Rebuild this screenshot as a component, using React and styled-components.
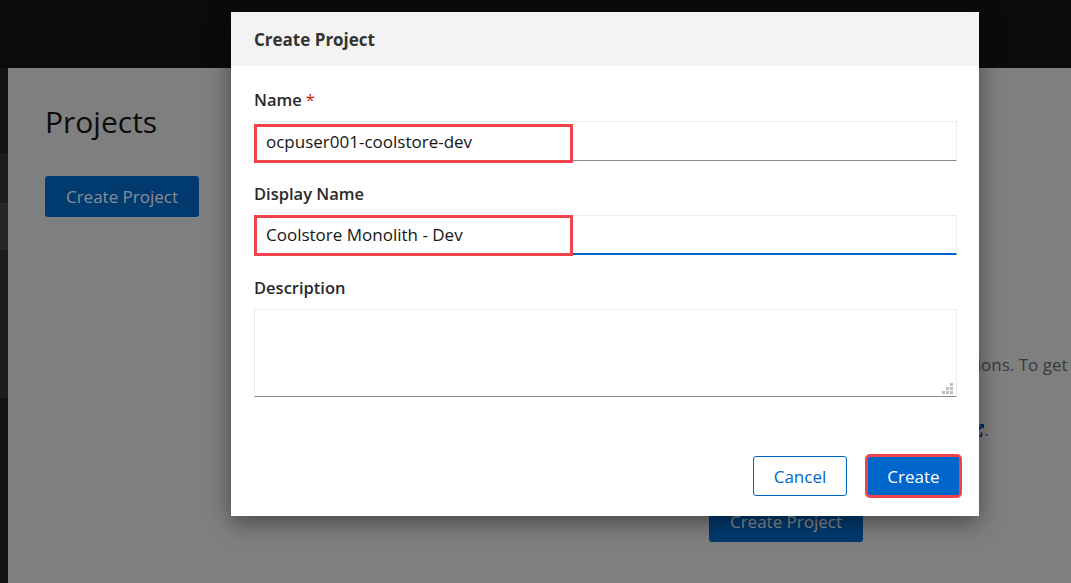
import React from "react";
import styled, { createGlobalStyle } from "styled-components";
import { FaExternalLinkAlt } from "react-icons/fa";

const GlobalStyle = createGlobalStyle`
  html, body {
    margin: 0;
    padding: 0;
    width: 1071px;
    height: 583px;
    overflow: hidden;
    background: #7f7f7f;
    font-family: "Open Sans", "Liberation Sans", sans-serif;
  }
  * { box-sizing: border-box; }
`;

const Page = styled.div`
  position: relative;
  width: 1071px;
  height: 583px;
  display: flex;
  flex-direction: column;
`;

const Masthead = styled.header`
  height: 68px;
  flex-shrink: 0;
  background: #0b0b0b;
`;

const Body = styled.div`
  flex: 1;
  display: flex;
  min-height: 0;
`;

const Sidebar = styled.nav`
  width: 8px;
  flex-shrink: 0;
  display: flex;
  flex-direction: column;
  background: #111214;
`;

const NavBand = styled.div`
  height: ${(p) => p.$h}px;
  background: ${(p) => p.$tone};
`;

const Main = styled.main`
  flex: 1;
  background: #7f7f7f;
  padding: 36px 0 0 37px;
  overflow: hidden;
`;

const Title = styled.h1`
  margin: 0;
  font-size: 30px;
  line-height: 36px;
  font-weight: 400;
  color: #0c0c0c;
`;

const PrimaryDim = styled.button`
  display: block;
  height: 41px;
  width: 154px;
  padding: 0;
  border: none;
  border-radius: 3px;
  background: #003a6f;
  color: #8a8e93;
  font-family: inherit;
  font-size: 17px;
`;

const HeaderButton = styled(PrimaryDim)`
  margin-top: 36px;
`;

const EmptyState = styled.section`
  margin: 73px 0 0 664px;
  white-space: nowrap;
`;

const EmptyTitle = styled.h2`
  margin: 0;
  font-size: 22px;
  line-height: 30px;
  font-weight: 400;
  color: #0c0c0c;
`;

const EmptyText = styled.p`
  margin: ${(p) => p.$top}px 0 0 ${(p) => p.$left}px;
  font-size: 17px;
  line-height: 24px;
  color: #3a3a3a;
`;

const DimLink = styled.span`
  color: #00315f;
  svg {
    width: 13px;
    height: 13px;
    margin-left: 2px;
    vertical-align: -1px;
  }
`;

const EmptyButton = styled(PrimaryDim)`
  margin-top: 59px;
`;

const Modal = styled.div`
  position: absolute;
  left: 231px;
  top: 12px;
  width: 748px;
  height: 504px;
  background: #fff;
  display: flex;
  flex-direction: column;
  box-shadow: 0 6px 22px rgba(0, 0, 0, 0.45);
`;

const ModalHeader = styled.div`
  height: 54px;
  display: flex;
  align-items: center;
  padding: 0 23px;
  background: #f3f3f3;
  font-size: 17px;
  font-weight: 700;
  color: #333;
`;

const ModalBody = styled.div`
  padding: 22px 22px 0 23px;
  display: flex;
  flex-direction: column;
`;

const Group = styled.div`
  margin-bottom: 21px;
`;

const Label = styled.label`
  display: block;
  font-size: 16.5px;
  line-height: 24px;
  font-weight: 600;
  color: #292929;
  margin-bottom: 9px;
`;

const Required = styled.span`
  color: #c9190b;
  margin-left: 4px;
  font-weight: 400;
`;

const Field = styled.div`
  position: relative;
`;

const Input = styled.input`
  display: block;
  width: 100%;
  height: 40px;
  padding: 0 10px 0 11px;
  border: 1px solid #ededed;
  border-bottom: ${(p) => (p.$focused ? "2px solid #0066cc" : "1px solid #8a8d90")};
  outline: none;
  font-family: inherit;
  font-size: 17px;
  color: #151515;
  background: #fff;
`;

const TextArea = styled.textarea`
  display: block;
  width: 100%;
  height: 88px;
  resize: none;
  border: 1px solid #ededed;
  border-bottom: 1px solid #8a8d90;
  outline: none;
  font-family: inherit;
  font-size: 17px;
`;

const Grip = styled.svg`
  position: absolute;
  right: 4px;
  bottom: 3px;
`;

const Highlight = styled.span`
  position: absolute;
  left: 0;
  top: ${(p) => p.$top}px;
  width: 319px;
  height: ${(p) => p.$h}px;
  border: 3px solid #f2434a;
  pointer-events: none;
`;

const Footer = styled.div`
  margin-top: auto;
  padding: 0 19px 20px 0;
  display: flex;
  justify-content: flex-end;
  gap: 20px;
`;

const Button = styled.button`
  height: 40px;
  padding: 0;
  width: ${(p) => p.$w}px;
  border-radius: 3px;
  font-family: inherit;
  font-size: 17px;
  border: 1px solid #0066cc;
  background: ${(p) => (p.$primary ? "#0066cc" : "#fff")};
  color: ${(p) => (p.$primary ? "#fff" : "#0066cc")};
  outline: ${(p) => (p.$marked ? "3px solid #f2434a" : "none")};
  outline-offset: -1px;
`;

const navBands = [
  { h: 85, tone: "#111214" },
  { h: 50, tone: "#1b1c1e" },
  { h: 47, tone: "#262729" },
  { h: 148, tone: "#1b1c1e" },
];

export default function App() {
  return (
    <>
      <GlobalStyle />
      <Page>
        <Masthead />
        <Body>
          <Sidebar>
            {navBands.map((b, i) => (
              <NavBand key={i} $h={b.h} $tone={b.tone} />
            ))}
          </Sidebar>
          <Main>
            <Title>Projects</Title>
            <HeaderButton>Create Project</HeaderButton>
            <EmptyState>
              <EmptyTitle>No projects found</EmptyTitle>
              <EmptyText $top={33} $left={28}>
                Select one of the following options. To get
              </EmptyText>
              <EmptyText $top={41} $left={64}>
                Read the documentation
                <DimLink>
                  <FaExternalLinkAlt />
                </DimLink>
                .
              </EmptyText>
              <EmptyButton>Create Project</EmptyButton>
            </EmptyState>
          </Main>
        </Body>

        <Modal role="dialog">
          <ModalHeader>Create Project</ModalHeader>
          <ModalBody>
            <Group>
              <Label>
                Name<Required>*</Required>
              </Label>
              <Field>
                <Input defaultValue="ocpuser001-coolstore-dev" />
                <Highlight $top={3} $h={39} />
              </Field>
            </Group>
            <Group>
              <Label>Display Name</Label>
              <Field>
                <Input $focused defaultValue="Coolstore Monolith - Dev" />
                <Highlight $top={0} $h={41} />
              </Field>
            </Group>
            <Group>
              <Label>Description</Label>
              <Field>
                <TextArea />
                <Grip width="11" height="11" viewBox="0 0 11 11">
                  <rect x="8" y="0" width="3" height="3" fill="#bdbdbd" />
                  <rect x="4" y="4" width="3" height="3" fill="#bdbdbd" />
                  <rect x="8" y="4" width="3" height="3" fill="#bdbdbd" />
                  <rect x="0" y="8" width="3" height="3" fill="#bdbdbd" />
                  <rect x="4" y="8" width="3" height="3" fill="#bdbdbd" />
                  <rect x="8" y="8" width="3" height="3" fill="#bdbdbd" />
                </Grip>
              </Field>
            </Group>
          </ModalBody>
          <Footer>
            <Button $w={94}>Cancel</Button>
            <Button $w={93} $primary $marked>
              Create
            </Button>
          </Footer>
        </Modal>
      </Page>
    </>
  );
}
